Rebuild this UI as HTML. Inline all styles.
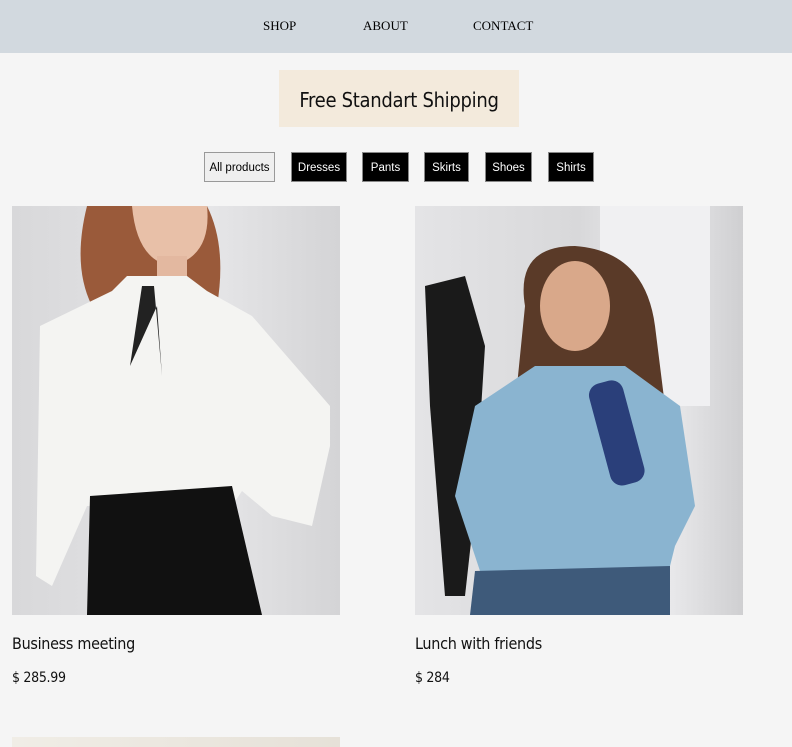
<!DOCTYPE html>
<html><head><meta charset="utf-8"><style>
*{margin:0;padding:0;box-sizing:border-box}
body{width:792px;height:747px;overflow:hidden;background:#f5f5f5;font-family:"DejaVu Sans","Liberation Sans",sans-serif;position:relative}
.nav{position:absolute;left:0;top:0;width:792px;height:53px;background:#d2d9df}
.nav span{position:absolute;top:18px;font-family:"Liberation Serif",serif;font-size:13px;color:#000}
.ship{position:absolute;left:279px;top:70px;width:240px;height:57px;background:#f3eadc;font-size:20px;text-align:center;line-height:60px;color:#111;font-family:"DejaVu Sans Condensed","DejaVu Sans",sans-serif;letter-spacing:-0.3px}
.btn{position:absolute;top:152px;height:30px;background:#000;color:#fff;font-size:11.5px;line-height:30px;text-align:center;font-family:"Liberation Sans",sans-serif;border:1px solid #888}
.img{position:absolute;top:206px;width:328px;height:409px;overflow:hidden}
.t{position:absolute;font-size:16px;color:#111;font-family:"DejaVu Sans Condensed","DejaVu Sans",sans-serif;letter-spacing:-0.3px}
.p{position:absolute;font-size:14px;color:#111;font-family:"DejaVu Sans Condensed","DejaVu Sans",sans-serif;letter-spacing:-0.3px}
</style></head><body>
<div class="nav"><span style="left:263px">SHOP</span><span style="left:363px">ABOUT</span><span style="left:473px">CONTACT</span></div>
<div class="ship">Free Standart Shipping</div>
<div class="btn" style="left:204px;width:71px;background:#efefef;color:#000;border-color:#999">All products</div>
<div class="btn" style="left:291px;width:56px">Dresses</div>
<div class="btn" style="left:362px;width:47px">Pants</div>
<div class="btn" style="left:424px;width:45px">Skirts</div>
<div class="btn" style="left:485px;width:47px">Shoes</div>
<div class="btn" style="left:548px;width:46px">Shirts</div>

<div class="img" style="left:12px;background:linear-gradient(90deg,#d8d8da,#e6e6e8 60%,#d4d4d6)">
<svg width="328" height="409">
<path d="M75 0 Q60 60 80 100 L205 100 Q215 40 195 0Z" fill="#9a5a3a"/>
<path d="M120 0 L195 0 Q200 50 160 60 Q125 55 120 0Z" fill="#e8c0a8"/>
<rect x="145" y="50" width="30" height="30" fill="#e3b8a0"/>
<path d="M28 120 L100 85 L115 70 L175 70 L195 85 L240 110 L318 200 L318 240 L300 320 L260 310 L230 285 L220 300 L75 300 L40 380 L24 370 Z" fill="#f4f4f2"/>
<path d="M78 290 L220 280 L250 409 L75 409Z" fill="#111"/>
<path d="M130 80 L118 160 L145 100 L150 170 L142 80Z" fill="#222"/>
</svg></div>

<div class="img" style="left:415px;background:linear-gradient(90deg,#e4e4e6,#d8d8da 50%,#ececee 75%,#cfcfd1)">
<svg width="328" height="409">
<rect x="185" y="0" width="110" height="200" fill="#f0f0f2"/>
<path d="M10 80 L50 70 L70 140 L60 300 L50 390 L30 390 L15 200Z" fill="#1a1a1a"/>
<path d="M110 100 Q100 40 160 40 Q230 45 240 120 L250 200 L100 200Z" fill="#5a3a28"/>
<ellipse cx="160" cy="100" rx="35" ry="45" fill="#d9a88a"/>
<path d="M60 200 L120 160 L210 160 L265 200 L280 300 L260 340 L250 380 L70 380 L40 290Z" fill="#8ab4d0"/>
<path d="M60 365 L255 360 L255 409 L55 409Z" fill="#3e5a7a"/>
<rect x="185" y="175" width="35" height="105" rx="12" fill="#2a3f7a" transform="rotate(-15 200 230)"/>
</svg></div>

<div class="t" style="left:12px;top:634px">Business meeting</div>
<div class="p" style="left:12px;top:670px">$ 285.99</div>
<div class="t" style="left:415px;top:634px">Lunch with friends</div>
<div class="p" style="left:415px;top:670px">$ 284</div>
<div style="position:absolute;left:12px;top:737px;width:328px;height:10px;background:linear-gradient(90deg,#f0ede6,#e6e1d8)"></div>
</body></html>
